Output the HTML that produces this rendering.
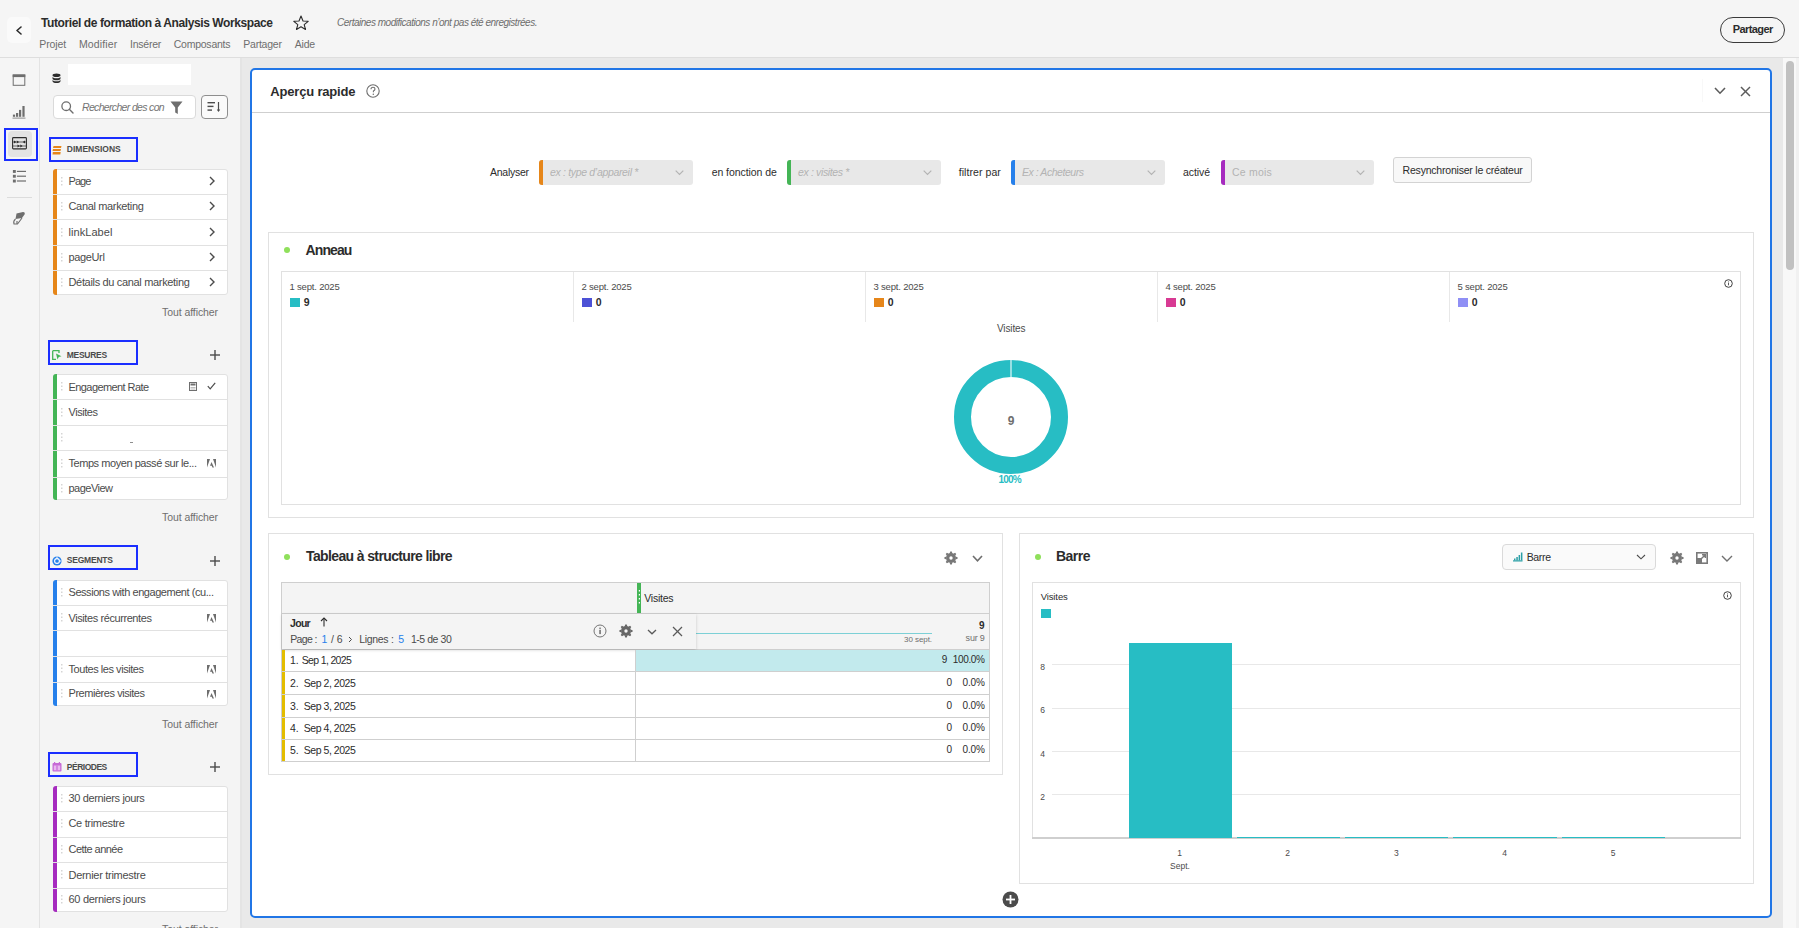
<!DOCTYPE html><html><head><meta charset="utf-8"><style>
html,body{margin:0;padding:0;width:1799px;height:928px;overflow:hidden;background:#f5f5f5;}
body{position:relative;font-family:"Liberation Sans",sans-serif;}
.r{position:absolute;display:block;}
.t{position:absolute;white-space:nowrap;line-height:1;}
</style></head><body>
<div class="r" style="left:0px;top:0px;width:1799px;height:57px;background:#f5f5f5"></div>
<div class="r" style="left:0px;top:57px;width:1799px;height:1px;background:#dedede"></div>
<div class="r" style="left:0px;top:58px;width:39px;height:870px;background:#f5f5f5"></div>
<div class="r" style="left:39px;top:58px;width:1px;height:870px;background:#e3e3e3"></div>
<div class="r" style="left:40px;top:58px;width:200px;height:870px;background:#f4f4f4"></div>
<div class="r" style="left:240px;top:58px;width:2px;height:870px;background:#e4e4e4"></div>
<div class="r" style="left:242px;top:58px;width:1541px;height:870px;background:#e9e9e9"></div>
<div class="r" style="left:1783px;top:58px;width:13px;height:870px;background:#f8f8f8"></div>
<div class="r" style="left:1796px;top:58px;width:3px;height:870px;background:#f1f1f1"></div>
<div class="r" style="left:1786px;top:61px;width:8px;height:209px;background:#c1c1c1;border-radius:4px"></div>
<div class="r" style="left:7px;top:17px;width:24px;height:26px;background:#fafafa;border-radius:5px"></div>
<svg class="r" style="left:15px;top:26px;" width="8" height="9" viewBox="0 0 8 9"><polyline points="6,1 2,4.5 6,8" fill="none" stroke="#2c2c2c" stroke-width="1.6" stroke-linecap="round" stroke-linejoin="round"/></svg>
<div class="t" style="left:41.00px;top:16.73px;font-size:12px;font-weight:bold;font-style:normal;color:#2c2c2c;letter-spacing:-0.404px;">Tutoriel de formation à Analysis Workspace</div>
<svg class="r" style="left:293px;top:15px;" width="16" height="15" viewBox="0 0 16 15"><polygon points="8,1 10,6 15.2,6.3 11.2,9.6 12.5,14.5 8,11.8 3.5,14.5 4.8,9.6 0.8,6.3 6,6" fill="none" stroke="#2c2c2c" stroke-width="1.1" stroke-linejoin="round"/></svg>
<div class="t" style="left:337.00px;top:17.70px;font-size:10px;font-weight:normal;font-style:italic;color:#6e6e6e;letter-spacing:-0.482px;">Certaines modifications n’ont pas été enregistrées.</div>
<div class="t" style="left:39.30px;top:39.13px;font-size:10.5px;font-weight:normal;font-style:normal;color:#6e6e6e;letter-spacing:-0.122px;">Projet</div>
<div class="t" style="left:79.00px;top:39.13px;font-size:10.5px;font-weight:normal;font-style:normal;color:#6e6e6e;letter-spacing:0.119px;">Modifier</div>
<div class="t" style="left:130.00px;top:39.13px;font-size:10.5px;font-weight:normal;font-style:normal;color:#6e6e6e;letter-spacing:-0.240px;">Insérer</div>
<div class="t" style="left:173.70px;top:39.13px;font-size:10.5px;font-weight:normal;font-style:normal;color:#6e6e6e;letter-spacing:-0.234px;">Composants</div>
<div class="t" style="left:243.30px;top:39.13px;font-size:10.5px;font-weight:normal;font-style:normal;color:#6e6e6e;letter-spacing:-0.234px;">Partager</div>
<div class="t" style="left:294.80px;top:39.13px;font-size:10.5px;font-weight:normal;font-style:normal;color:#6e6e6e;letter-spacing:-0.204px;">Aide</div>
<div class="r" style="left:1720px;top:17px;width:65px;height:26px;border:1.6px solid #3a3a3a;border-radius:13px;box-sizing:border-box"></div>
<div class="t" style="left:1732.70px;top:24.06px;font-size:11px;font-weight:bold;font-style:normal;color:#2c2c2c;letter-spacing:-0.579px;">Partager</div>
<svg class="r" style="left:12px;top:74px;" width="14" height="12" viewBox="0 0 14 12"><rect x="1.2" y="1" width="11.6" height="10.3" fill="none" stroke="#6e6e6e" stroke-width="1"/><rect x="0.7" y="0.5" width="12.6" height="2.6" fill="#6e6e6e"/></svg>
<svg class="r" style="left:12px;top:105px;" width="14" height="14" viewBox="0 0 14 14"><rect x="0.9" y="9.6" width="2.2" height="2.2" fill="#6e6e6e"/><rect x="4" y="8" width="2.2" height="3.8" fill="#6e6e6e"/><rect x="7" y="4.9" width="2.2" height="6.9" fill="#6e6e6e"/><rect x="10.4" y="1" width="2.2" height="10.8" fill="#6e6e6e"/><rect x="0.5" y="12.6" width="13" height="1" fill="#8a8a8a"/></svg>
<div class="r" style="left:4px;top:128px;width:34px;height:33px;border:2px solid #1a2eff;box-sizing:border-box"></div>
<div class="r" style="left:8px;top:131px;width:24px;height:26px;background:#e3e3e3;border-radius:4px"></div>
<svg class="r" style="left:12px;top:137px;" width="15" height="13" viewBox="0 0 15 13"><rect x="0.6" y="0.6" width="13.8" height="11.3" rx="0.8" fill="none" stroke="#2c2c2c" stroke-width="1.1"/><line x1="1" y1="5" x2="14" y2="5" stroke="#2c2c2c" stroke-width="0.7"/><line x1="1" y1="9" x2="14" y2="9" stroke="#2c2c2c" stroke-width="0.7"/><path d="M2 3.5 L4.3 5 L2 6.5Z M4.8 3.5 L7.1 5 L4.8 6.5Z M13 3.5 L10.7 5 L13 6.5Z M5.5 7.5 L7.8 9 L5.5 10.5Z M8.3 7.5 L10.6 9 L8.3 10.5Z" fill="#2c2c2c"/></svg>
<svg class="r" style="left:12px;top:169px;" width="15" height="14" viewBox="0 0 15 14"><rect x="0.9" y="1" width="2.9" height="2.9" fill="#6e6e6e"/><rect x="0.9" y="5.8" width="2.9" height="2.9" fill="#6e6e6e"/><rect x="0.9" y="10.6" width="2.9" height="2.9" fill="#6e6e6e"/><rect x="4.9" y="1.8" width="9.1" height="1.2" fill="#6e6e6e"/><rect x="4.9" y="6.6" width="9.1" height="1.2" fill="#6e6e6e"/><rect x="4.9" y="11.4" width="9.1" height="1.2" fill="#6e6e6e"/></svg>
<div class="r" style="left:7px;top:197px;width:25px;height:1px;background:#dcdcdc"></div>
<svg class="r" style="left:12px;top:211px;" width="14" height="15" viewBox="0 0 14 15"><path d="M4.5 2.5 L11 1 Q13.5 1 12.5 3.5 L10 7 L3.5 8 Z" fill="#6e6e6e"/><path d="M3.5 8 Q1 10 2 13 H5.5 L10 7" fill="none" stroke="#6e6e6e" stroke-width="1.1"/><path d="M5 10 V13" stroke="#6e6e6e" stroke-width="1.2"/></svg>
<svg class="r" style="left:52px;top:73px;" width="9" height="10" viewBox="0 0 9 10"><ellipse cx="4.5" cy="2.2" rx="4" ry="1.8" fill="#2c2c2c"/><path d="M0.5 3.5 v2 a4 1.8 0 0 0 8 0 v-2 a4 1.8 0 0 1 -8 0z" fill="#2c2c2c"/><path d="M0.5 6.5 v1.8 a4 1.8 0 0 0 8 0 v-1.8 a4 1.8 0 0 1 -8 0z" fill="#2c2c2c"/></svg>
<div class="r" style="left:68px;top:64px;width:123px;height:21px;background:#ffffff"></div>
<div class="r" style="left:53px;top:95px;width:143px;height:24px;background:#fff;border:1px solid #dadada;border-radius:4px;box-sizing:border-box"></div>
<svg class="r" style="left:61px;top:101px;" width="13" height="13" viewBox="0 0 13 13"><circle cx="5.2" cy="5.2" r="4.3" fill="none" stroke="#6e6e6e" stroke-width="1.3"/><line x1="8.3" y1="8.3" x2="12" y2="12" stroke="#6e6e6e" stroke-width="1.4" stroke-linecap="round"/></svg>
<div class="t" style="left:82.00px;top:101.93px;font-size:10.5px;font-weight:normal;font-style:italic;color:#747474;letter-spacing:-0.665px;">Rechercher des con</div>
<svg class="r" style="left:170px;top:101px;" width="13" height="14" viewBox="0 0 13 14"><path d="M0.5 0.5 H12.5 L7.8 6.5 V13 L5.2 11.5 V6.5 Z" fill="#6e6e6e"/></svg>
<div class="r" style="left:201px;top:95px;width:27px;height:24px;border:1px solid #8e8e8e;border-radius:4px;box-sizing:border-box;background:#fafafa"></div>
<svg class="r" style="left:207px;top:101px;" width="15" height="12" viewBox="0 0 15 12"><rect x="0.5" y="1" width="7.5" height="1.4" fill="#4b4b4b"/><rect x="0.5" y="4.7" width="6" height="1.4" fill="#4b4b4b"/><rect x="0.5" y="8.4" width="4.5" height="1.4" fill="#4b4b4b"/><line x1="11.5" y1="1" x2="11.5" y2="10" stroke="#4b4b4b" stroke-width="1.2"/><path d="M9.8 8.6 L11.5 11 L13.2 8.6 Z" fill="#4b4b4b"/></svg>
<div class="r" style="left:49px;top:137px;width:89px;height:25px;border:2px solid #1a2eff;box-sizing:border-box"></div>
<svg class="r" style="left:52px;top:144.5px" width="10" height="10" viewBox="0 0 10 10"><path d="M1.5 1 H9.5 L9 3 H1Z M1 4 H9 L8.5 6 H0.5Z M0.8 7 H8.7 L8.3 9.5 H0.5Z" fill="#e68619"/></svg>
<div class="t" style="left:66.80px;top:145.09px;font-size:8.5px;font-weight:bold;font-style:normal;color:#4b4b4b;letter-spacing:0.016px;">DIMENSIONS</div>
<div class="r" style="left:53px;top:169.1px;width:175px;height:125.50000000000003px;background:#fff;border:1px solid #e1e1e1;border-radius:3px;box-sizing:border-box"></div>
<div class="r" style="left:53px;top:169.1px;width:4px;height:24.599999999999994px;background:#e68619;border-radius:3px 0 0 0"></div>
<svg class="r" style="left:61px;top:176.90px" width="2" height="9"><rect x="0" y="0" width="1.5" height="1.5" fill="#d5d5d5"/><rect x="0" y="3.5" width="1.5" height="1.5" fill="#d5d5d5"/><rect x="0" y="7" width="1.5" height="1.5" fill="#d5d5d5"/></svg>
<div class="t" style="left:68.50px;top:176.16px;font-size:11px;font-weight:normal;font-style:normal;color:#4b4b4b;letter-spacing:-0.922px;">Page</div>
<svg class="r" style="left:208px;top:176.10px" width="8" height="10"><polyline points="2,1 6,5 2,9" fill="none" stroke="#4b4b4b" stroke-width="1.4"/></svg>
<div class="r" style="left:53px;top:194.7px;width:4px;height:24.600000000000023px;background:#e68619;border-radius:0"></div>
<div class="r" style="left:53px;top:193.7px;width:174px;height:1.0px;background:#e1e1e1"></div>
<svg class="r" style="left:61px;top:202.00px" width="2" height="9"><rect x="0" y="0" width="1.5" height="1.5" fill="#d5d5d5"/><rect x="0" y="3.5" width="1.5" height="1.5" fill="#d5d5d5"/><rect x="0" y="7" width="1.5" height="1.5" fill="#d5d5d5"/></svg>
<div class="t" style="left:68.50px;top:201.26px;font-size:11px;font-weight:normal;font-style:normal;color:#4b4b4b;letter-spacing:-0.340px;">Canal marketing</div>
<svg class="r" style="left:208px;top:201.20px" width="8" height="10"><polyline points="2,1 6,5 2,9" fill="none" stroke="#4b4b4b" stroke-width="1.4"/></svg>
<div class="r" style="left:53px;top:220.3px;width:4px;height:24.5px;background:#e68619;border-radius:0"></div>
<div class="r" style="left:53px;top:219.3px;width:174px;height:1.0px;background:#e1e1e1"></div>
<svg class="r" style="left:61px;top:227.55px" width="2" height="9"><rect x="0" y="0" width="1.5" height="1.5" fill="#d5d5d5"/><rect x="0" y="3.5" width="1.5" height="1.5" fill="#d5d5d5"/><rect x="0" y="7" width="1.5" height="1.5" fill="#d5d5d5"/></svg>
<div class="t" style="left:68.50px;top:226.81px;font-size:11px;font-weight:normal;font-style:normal;color:#4b4b4b;letter-spacing:0.064px;">linkLabel</div>
<svg class="r" style="left:208px;top:226.75px" width="8" height="10"><polyline points="2,1 6,5 2,9" fill="none" stroke="#4b4b4b" stroke-width="1.4"/></svg>
<div class="r" style="left:53px;top:245.8px;width:4px;height:24.30000000000001px;background:#e68619;border-radius:0"></div>
<div class="r" style="left:53px;top:244.8px;width:174px;height:1.0px;background:#e1e1e1"></div>
<svg class="r" style="left:61px;top:252.95px" width="2" height="9"><rect x="0" y="0" width="1.5" height="1.5" fill="#d5d5d5"/><rect x="0" y="3.5" width="1.5" height="1.5" fill="#d5d5d5"/><rect x="0" y="7" width="1.5" height="1.5" fill="#d5d5d5"/></svg>
<div class="t" style="left:68.50px;top:252.21px;font-size:11px;font-weight:normal;font-style:normal;color:#4b4b4b;letter-spacing:-0.360px;">pageUrl</div>
<svg class="r" style="left:208px;top:252.15px" width="8" height="10"><polyline points="2,1 6,5 2,9" fill="none" stroke="#4b4b4b" stroke-width="1.4"/></svg>
<div class="r" style="left:53px;top:271.1px;width:4px;height:23.5px;background:#e68619;border-radius:0;border-bottom-left-radius:3px"></div>
<div class="r" style="left:53px;top:270.1px;width:174px;height:1.0px;background:#e1e1e1"></div>
<svg class="r" style="left:61px;top:277.85px" width="2" height="9"><rect x="0" y="0" width="1.5" height="1.5" fill="#d5d5d5"/><rect x="0" y="3.5" width="1.5" height="1.5" fill="#d5d5d5"/><rect x="0" y="7" width="1.5" height="1.5" fill="#d5d5d5"/></svg>
<div class="t" style="left:68.50px;top:277.11px;font-size:11px;font-weight:normal;font-style:normal;color:#4b4b4b;letter-spacing:-0.332px;">Détails du canal marketing</div>
<svg class="r" style="left:208px;top:277.05px" width="8" height="10"><polyline points="2,1 6,5 2,9" fill="none" stroke="#4b4b4b" stroke-width="1.4"/></svg>
<div class="t" style="left:162.00px;top:306.83px;font-size:10.5px;font-weight:normal;font-style:normal;color:#6e6e6e;letter-spacing:-0.077px;">Tout afficher</div>
<div class="r" style="left:48px;top:339.5px;width:90px;height:25.0px;border:2px solid #1a2eff;box-sizing:border-box"></div>
<svg class="r" style="left:52px;top:350.0px" width="10" height="10" viewBox="0 0 10 10"><path d="M0.7 0.7 H7 V3 M0.7 0.7 V9.3 H4" fill="none" stroke="#44b556" stroke-width="1.3"/><path d="M4 3.5 L9.5 6.2 L6.8 7 L5.5 9.5Z" fill="#44b556"/></svg>
<div class="t" style="left:66.80px;top:350.59px;font-size:8.5px;font-weight:bold;font-style:normal;color:#4b4b4b;letter-spacing:-0.291px;">MESURES</div>
<svg class="r" style="left:210px;top:350.0px;" width="10" height="10" viewBox="0 0 10 10"><line x1="5" y1="0" x2="5" y2="10" stroke="#4b4b4b" stroke-width="1.4"/><line x1="0" y1="5" x2="10" y2="5" stroke="#4b4b4b" stroke-width="1.4"/></svg>
<div class="r" style="left:53px;top:374.1px;width:175px;height:125.5px;background:#fff;border:1px solid #e1e1e1;border-radius:3px;box-sizing:border-box"></div>
<div class="r" style="left:53px;top:374.1px;width:4px;height:25.299999999999955px;background:#44b556;border-radius:3px 0 0 0"></div>
<svg class="r" style="left:61px;top:382.25px" width="2" height="9"><rect x="0" y="0" width="1.5" height="1.5" fill="#d5d5d5"/><rect x="0" y="3.5" width="1.5" height="1.5" fill="#d5d5d5"/><rect x="0" y="7" width="1.5" height="1.5" fill="#d5d5d5"/></svg>
<div class="t" style="left:68.50px;top:381.51px;font-size:11px;font-weight:normal;font-style:normal;color:#4b4b4b;letter-spacing:-0.578px;">Engagement Rate</div>
<svg class="r" style="left:189px;top:382.45px" width="8" height="9"><rect x="0.5" y="0.5" width="7" height="8" fill="none" stroke="#6e6e6e" stroke-width="1"/><rect x="1.5" y="1.5" width="5" height="2" fill="#6e6e6e"/><rect x="1.5" y="5" width="5" height="0.8" fill="#aaa"/><rect x="1.5" y="6.6" width="5" height="0.8" fill="#aaa"/></svg><svg class="r" style="left:207px;top:382.25px" width="9" height="8"><polyline points="0.8,4.2 3.2,6.8 8.2,0.8" fill="none" stroke="#4b4b4b" stroke-width="1.2"/></svg>
<div class="r" style="left:53px;top:400.4px;width:4px;height:24.200000000000045px;background:#44b556;border-radius:0"></div>
<div class="r" style="left:53px;top:399.4px;width:174px;height:1.0px;background:#e1e1e1"></div>
<svg class="r" style="left:61px;top:407.50px" width="2" height="9"><rect x="0" y="0" width="1.5" height="1.5" fill="#d5d5d5"/><rect x="0" y="3.5" width="1.5" height="1.5" fill="#d5d5d5"/><rect x="0" y="7" width="1.5" height="1.5" fill="#d5d5d5"/></svg>
<div class="t" style="left:68.50px;top:406.76px;font-size:11px;font-weight:normal;font-style:normal;color:#4b4b4b;letter-spacing:-0.457px;">Visites</div>
<div class="r" style="left:53px;top:425.6px;width:4px;height:24.5px;background:#44b556;border-radius:0"></div>
<div class="r" style="left:53px;top:424.6px;width:174px;height:1.0px;background:#e1e1e1"></div>
<svg class="r" style="left:61px;top:432.85px" width="2" height="9"><rect x="0" y="0" width="1.5" height="1.5" fill="#d5d5d5"/><rect x="0" y="3.5" width="1.5" height="1.5" fill="#d5d5d5"/><rect x="0" y="7" width="1.5" height="1.5" fill="#d5d5d5"/></svg>
<div class="r" style="left:130px;top:441.85px;width:3px;height:1px;background:#8e8e8e"></div>
<div class="r" style="left:53px;top:451.1px;width:4px;height:25.5px;background:#44b556;border-radius:0"></div>
<div class="r" style="left:53px;top:450.1px;width:174px;height:1.0px;background:#e1e1e1"></div>
<svg class="r" style="left:61px;top:458.85px" width="2" height="9"><rect x="0" y="0" width="1.5" height="1.5" fill="#d5d5d5"/><rect x="0" y="3.5" width="1.5" height="1.5" fill="#d5d5d5"/><rect x="0" y="7" width="1.5" height="1.5" fill="#d5d5d5"/></svg>
<div class="t" style="left:68.50px;top:458.11px;font-size:11px;font-weight:normal;font-style:normal;color:#4b4b4b;letter-spacing:-0.445px;">Temps moyen passé sur le...</div>
<svg class="r" style="left:207px;top:459.35px" width="9" height="9" viewBox="0 0 9 9"><path d="M0 0 H3 L0 8.5Z M6 0 H9 V8.5Z M4.5 3 L7 8.5 H5.4 L4.7 6.8 H3 Z" fill="#6e6e6e"/></svg>
<div class="r" style="left:53px;top:477.6px;width:4px;height:22.0px;background:#44b556;border-radius:0;border-bottom-left-radius:3px"></div>
<div class="r" style="left:53px;top:476.6px;width:174px;height:1.0px;background:#e1e1e1"></div>
<svg class="r" style="left:61px;top:483.60px" width="2" height="9"><rect x="0" y="0" width="1.5" height="1.5" fill="#d5d5d5"/><rect x="0" y="3.5" width="1.5" height="1.5" fill="#d5d5d5"/><rect x="0" y="7" width="1.5" height="1.5" fill="#d5d5d5"/></svg>
<div class="t" style="left:68.50px;top:482.86px;font-size:11px;font-weight:normal;font-style:normal;color:#4b4b4b;letter-spacing:-0.514px;">pageView</div>
<div class="t" style="left:162.00px;top:512.23px;font-size:10.5px;font-weight:normal;font-style:normal;color:#6e6e6e;letter-spacing:-0.077px;">Tout afficher</div>
<div class="r" style="left:48px;top:545px;width:90px;height:25px;border:2px solid #1a2eff;box-sizing:border-box"></div>
<svg class="r" style="left:52px;top:555.5px" width="10" height="10" viewBox="0 0 10 10"><circle cx="5" cy="5" r="4.6" fill="#2680eb"/><circle cx="5" cy="5" r="2.4" fill="none" stroke="#fff" stroke-width="1.1"/><path d="M5 0.6 V2.4 M9.2 5 H7.4" stroke="#fff" stroke-width="1"/></svg>
<div class="t" style="left:66.80px;top:556.09px;font-size:8.5px;font-weight:bold;font-style:normal;color:#4b4b4b;letter-spacing:-0.213px;">SEGMENTS</div>
<svg class="r" style="left:210px;top:555.5px;" width="10" height="10" viewBox="0 0 10 10"><line x1="5" y1="0" x2="5" y2="10" stroke="#4b4b4b" stroke-width="1.4"/><line x1="0" y1="5" x2="10" y2="5" stroke="#4b4b4b" stroke-width="1.4"/></svg>
<div class="r" style="left:53px;top:580.1px;width:175px;height:125.69999999999993px;background:#fff;border:1px solid #e1e1e1;border-radius:3px;box-sizing:border-box"></div>
<div class="r" style="left:53px;top:580.1px;width:4px;height:25.199999999999932px;background:#2680eb;border-radius:3px 0 0 0"></div>
<svg class="r" style="left:61px;top:588.20px" width="2" height="9"><rect x="0" y="0" width="1.5" height="1.5" fill="#d5d5d5"/><rect x="0" y="3.5" width="1.5" height="1.5" fill="#d5d5d5"/><rect x="0" y="7" width="1.5" height="1.5" fill="#d5d5d5"/></svg>
<div class="t" style="left:68.50px;top:587.46px;font-size:11px;font-weight:normal;font-style:normal;color:#4b4b4b;letter-spacing:-0.451px;">Sessions with engagement (cu...</div>
<div class="r" style="left:53px;top:606.3px;width:4px;height:24.0px;background:#2680eb;border-radius:0"></div>
<div class="r" style="left:53px;top:605.3px;width:174px;height:1.0px;background:#e1e1e1"></div>
<svg class="r" style="left:61px;top:613.30px" width="2" height="9"><rect x="0" y="0" width="1.5" height="1.5" fill="#d5d5d5"/><rect x="0" y="3.5" width="1.5" height="1.5" fill="#d5d5d5"/><rect x="0" y="7" width="1.5" height="1.5" fill="#d5d5d5"/></svg>
<div class="t" style="left:68.50px;top:612.56px;font-size:11px;font-weight:normal;font-style:normal;color:#4b4b4b;letter-spacing:-0.415px;">Visites récurrentes</div>
<svg class="r" style="left:207px;top:613.80px" width="9" height="9" viewBox="0 0 9 9"><path d="M0 0 H3 L0 8.5Z M6 0 H9 V8.5Z M4.5 3 L7 8.5 H5.4 L4.7 6.8 H3 Z" fill="#6e6e6e"/></svg>
<div class="r" style="left:53px;top:631.3px;width:4px;height:25.0px;background:#2680eb;border-radius:0"></div>
<div class="r" style="left:53px;top:630.3px;width:174px;height:1.0px;background:#e1e1e1"></div>
<div class="r" style="left:53px;top:657.3px;width:4px;height:24.300000000000068px;background:#2680eb;border-radius:0"></div>
<div class="r" style="left:53px;top:656.3px;width:174px;height:1.0px;background:#e1e1e1"></div>
<svg class="r" style="left:61px;top:664.45px" width="2" height="9"><rect x="0" y="0" width="1.5" height="1.5" fill="#d5d5d5"/><rect x="0" y="3.5" width="1.5" height="1.5" fill="#d5d5d5"/><rect x="0" y="7" width="1.5" height="1.5" fill="#d5d5d5"/></svg>
<div class="t" style="left:68.50px;top:663.71px;font-size:11px;font-weight:normal;font-style:normal;color:#4b4b4b;letter-spacing:-0.452px;">Toutes les visites</div>
<svg class="r" style="left:207px;top:664.95px" width="9" height="9" viewBox="0 0 9 9"><path d="M0 0 H3 L0 8.5Z M6 0 H9 V8.5Z M4.5 3 L7 8.5 H5.4 L4.7 6.8 H3 Z" fill="#6e6e6e"/></svg>
<div class="r" style="left:53px;top:682.6px;width:4px;height:23.199999999999932px;background:#2680eb;border-radius:0;border-bottom-left-radius:3px"></div>
<div class="r" style="left:53px;top:681.6px;width:174px;height:1.0px;background:#e1e1e1"></div>
<svg class="r" style="left:61px;top:689.20px" width="2" height="9"><rect x="0" y="0" width="1.5" height="1.5" fill="#d5d5d5"/><rect x="0" y="3.5" width="1.5" height="1.5" fill="#d5d5d5"/><rect x="0" y="7" width="1.5" height="1.5" fill="#d5d5d5"/></svg>
<div class="t" style="left:68.50px;top:688.46px;font-size:11px;font-weight:normal;font-style:normal;color:#4b4b4b;letter-spacing:-0.455px;">Premières visites</div>
<svg class="r" style="left:207px;top:689.70px" width="9" height="9" viewBox="0 0 9 9"><path d="M0 0 H3 L0 8.5Z M6 0 H9 V8.5Z M4.5 3 L7 8.5 H5.4 L4.7 6.8 H3 Z" fill="#6e6e6e"/></svg>
<div class="t" style="left:162.00px;top:718.73px;font-size:10.5px;font-weight:normal;font-style:normal;color:#6e6e6e;letter-spacing:-0.077px;">Tout afficher</div>
<div class="r" style="left:48px;top:751.5px;width:90px;height:25.5px;border:2px solid #1a2eff;box-sizing:border-box"></div>
<svg class="r" style="left:52px;top:762.25px" width="10" height="10" viewBox="0 0 10 10"><rect x="0.5" y="1" width="9" height="8.5" rx="1" fill="#c76ad6"/><rect x="1.8" y="3.5" width="6.4" height="4.8" fill="#e9b6f0"/><rect x="2" y="0" width="1.2" height="2" fill="#c76ad6"/><rect x="6.8" y="0" width="1.2" height="2" fill="#c76ad6"/><rect x="4.4" y="3.5" width="1.2" height="4.8" fill="#c76ad6"/></svg>
<div class="t" style="left:66.80px;top:762.84px;font-size:8.5px;font-weight:bold;font-style:normal;color:#4b4b4b;letter-spacing:-0.491px;">PÉRIODES</div>
<svg class="r" style="left:210px;top:762.25px;" width="10" height="10" viewBox="0 0 10 10"><line x1="5" y1="0" x2="5" y2="10" stroke="#4b4b4b" stroke-width="1.4"/><line x1="0" y1="5" x2="10" y2="5" stroke="#4b4b4b" stroke-width="1.4"/></svg>
<div class="r" style="left:53px;top:786.1px;width:175px;height:125.5px;background:#fff;border:1px solid #e1e1e1;border-radius:3px;box-sizing:border-box"></div>
<div class="r" style="left:53px;top:786.1px;width:4px;height:24.600000000000023px;background:#a62bbf;border-radius:3px 0 0 0"></div>
<svg class="r" style="left:61px;top:793.90px" width="2" height="9"><rect x="0" y="0" width="1.5" height="1.5" fill="#d5d5d5"/><rect x="0" y="3.5" width="1.5" height="1.5" fill="#d5d5d5"/><rect x="0" y="7" width="1.5" height="1.5" fill="#d5d5d5"/></svg>
<div class="t" style="left:68.50px;top:793.16px;font-size:11px;font-weight:normal;font-style:normal;color:#4b4b4b;letter-spacing:-0.349px;">30 derniers jours</div>
<div class="r" style="left:53px;top:811.7px;width:4px;height:24.899999999999977px;background:#a62bbf;border-radius:0"></div>
<div class="r" style="left:53px;top:810.7px;width:174px;height:1.0px;background:#e1e1e1"></div>
<svg class="r" style="left:61px;top:819.15px" width="2" height="9"><rect x="0" y="0" width="1.5" height="1.5" fill="#d5d5d5"/><rect x="0" y="3.5" width="1.5" height="1.5" fill="#d5d5d5"/><rect x="0" y="7" width="1.5" height="1.5" fill="#d5d5d5"/></svg>
<div class="t" style="left:68.50px;top:818.41px;font-size:11px;font-weight:normal;font-style:normal;color:#4b4b4b;letter-spacing:-0.325px;">Ce trimestre</div>
<div class="r" style="left:53px;top:837.6px;width:4px;height:24.5px;background:#a62bbf;border-radius:0"></div>
<div class="r" style="left:53px;top:836.6px;width:174px;height:1.0px;background:#e1e1e1"></div>
<svg class="r" style="left:61px;top:844.85px" width="2" height="9"><rect x="0" y="0" width="1.5" height="1.5" fill="#d5d5d5"/><rect x="0" y="3.5" width="1.5" height="1.5" fill="#d5d5d5"/><rect x="0" y="7" width="1.5" height="1.5" fill="#d5d5d5"/></svg>
<div class="t" style="left:68.50px;top:844.11px;font-size:11px;font-weight:normal;font-style:normal;color:#4b4b4b;letter-spacing:-0.540px;">Cette année</div>
<div class="r" style="left:53px;top:863.1px;width:4px;height:24.5px;background:#a62bbf;border-radius:0"></div>
<div class="r" style="left:53px;top:862.1px;width:174px;height:1.0px;background:#e1e1e1"></div>
<svg class="r" style="left:61px;top:870.35px" width="2" height="9"><rect x="0" y="0" width="1.5" height="1.5" fill="#d5d5d5"/><rect x="0" y="3.5" width="1.5" height="1.5" fill="#d5d5d5"/><rect x="0" y="7" width="1.5" height="1.5" fill="#d5d5d5"/></svg>
<div class="t" style="left:68.50px;top:869.61px;font-size:11px;font-weight:normal;font-style:normal;color:#4b4b4b;letter-spacing:-0.288px;">Dernier trimestre</div>
<div class="r" style="left:53px;top:888.6px;width:4px;height:23.0px;background:#a62bbf;border-radius:0;border-bottom-left-radius:3px"></div>
<div class="r" style="left:53px;top:887.6px;width:174px;height:1.0px;background:#e1e1e1"></div>
<svg class="r" style="left:61px;top:895.10px" width="2" height="9"><rect x="0" y="0" width="1.5" height="1.5" fill="#d5d5d5"/><rect x="0" y="3.5" width="1.5" height="1.5" fill="#d5d5d5"/><rect x="0" y="7" width="1.5" height="1.5" fill="#d5d5d5"/></svg>
<div class="t" style="left:68.50px;top:894.36px;font-size:11px;font-weight:normal;font-style:normal;color:#4b4b4b;letter-spacing:-0.290px;">60 derniers jours</div>
<div class="t" style="left:162.00px;top:924.43px;font-size:10.5px;font-weight:normal;font-style:normal;color:#6e6e6e;letter-spacing:-0.077px;">Tout afficher</div>
<div class="r" style="left:250px;top:68px;width:1522px;height:850px;background:#fff;border:2px solid #2176e6;border-radius:5px;box-sizing:border-box"></div>
<div class="r" style="left:252px;top:112px;width:1518px;height:1px;background:#cfcfcf"></div>
<div class="t" style="left:270.30px;top:84.90px;font-size:13px;font-weight:bold;font-style:normal;color:#2c2c2c;letter-spacing:-0.186px;">Aperçu rapide</div>
<svg class="r" style="left:366px;top:84px;" width="14" height="14" viewBox="0 0 14 14"><circle cx="7" cy="7" r="6.2" fill="none" stroke="#6e6e6e" stroke-width="1.1"/><path d="M5 5.3 Q5 3.3 7 3.3 Q9 3.3 9 5.1 Q9 6.3 7.4 7 V8.3" fill="none" stroke="#6e6e6e" stroke-width="1.1"/><circle cx="7.3" cy="10.3" r="0.75" fill="#6e6e6e"/></svg>
<div class="r" style="left:1702px;top:79px;width:1px;height:23px;background:#f8f8f8"></div>
<svg class="r" style="left:1714px;top:87px;" width="12" height="8" viewBox="0 0 12 8"><polyline points="1,1 6,6.2 11,1" fill="none" stroke="#5c5c5c" stroke-width="1.6"/></svg>
<svg class="r" style="left:1740px;top:86px;" width="11" height="11" viewBox="0 0 11 11"><line x1="1" y1="1" x2="10" y2="10" stroke="#5c5c5c" stroke-width="1.5"/><line x1="10" y1="1" x2="1" y2="10" stroke="#5c5c5c" stroke-width="1.5"/></svg>
<div class="t" style="left:490.00px;top:167.03px;font-size:10.5px;font-weight:normal;font-style:normal;color:#2c2c2c;letter-spacing:-0.269px;">Analyser</div>
<div class="r" style="left:539px;top:160px;width:154px;height:25px;background:#e8e8e8;border-radius:3px"></div>
<div class="r" style="left:539px;top:160px;width:4px;height:25px;background:#e68619;border-radius:3px 0 0 3px"></div>
<div class="t" style="left:550.00px;top:166.63px;font-size:10.5px;font-weight:normal;font-style:italic;color:#b3b3b3;letter-spacing:-0.325px;">ex : type d’appareil *</div>
<svg class="r" style="left:675px;top:170px;" width="9" height="6" viewBox="0 0 9 6"><polyline points="0.7,0.7 4.5,4.5 8.3,0.7" fill="none" stroke="#b3b3b3" stroke-width="1.2"/></svg>
<div class="t" style="left:711.70px;top:167.03px;font-size:10.5px;font-weight:normal;font-style:normal;color:#2c2c2c;letter-spacing:-0.069px;">en fonction de</div>
<div class="r" style="left:787px;top:160px;width:154px;height:25px;background:#e8e8e8;border-radius:3px"></div>
<div class="r" style="left:787px;top:160px;width:4px;height:25px;background:#44b556;border-radius:3px 0 0 3px"></div>
<div class="t" style="left:798.00px;top:166.63px;font-size:10.5px;font-weight:normal;font-style:italic;color:#b3b3b3;letter-spacing:-0.358px;">ex : visites *</div>
<svg class="r" style="left:923px;top:170px;" width="9" height="6" viewBox="0 0 9 6"><polyline points="0.7,0.7 4.5,4.5 8.3,0.7" fill="none" stroke="#b3b3b3" stroke-width="1.2"/></svg>
<div class="t" style="left:958.70px;top:167.03px;font-size:10.5px;font-weight:normal;font-style:normal;color:#2c2c2c;letter-spacing:0.070px;">filtrer par</div>
<div class="r" style="left:1011px;top:160px;width:154px;height:25px;background:#e8e8e8;border-radius:3px"></div>
<div class="r" style="left:1011px;top:160px;width:4px;height:25px;background:#2680eb;border-radius:3px 0 0 3px"></div>
<div class="t" style="left:1022.00px;top:166.63px;font-size:10.5px;font-weight:normal;font-style:italic;color:#b3b3b3;letter-spacing:-0.449px;">Ex : Acheteurs</div>
<svg class="r" style="left:1147px;top:170px;" width="9" height="6" viewBox="0 0 9 6"><polyline points="0.7,0.7 4.5,4.5 8.3,0.7" fill="none" stroke="#b3b3b3" stroke-width="1.2"/></svg>
<div class="t" style="left:1183.00px;top:167.03px;font-size:10.5px;font-weight:normal;font-style:normal;color:#2c2c2c;letter-spacing:-0.072px;">activé</div>
<div class="r" style="left:1221px;top:160px;width:153px;height:25px;background:#e8e8e8;border-radius:3px"></div>
<div class="r" style="left:1221px;top:160px;width:4px;height:25px;background:#a62bbf;border-radius:3px 0 0 3px"></div>
<div class="t" style="left:1232.00px;top:166.63px;font-size:10.5px;font-weight:normal;font-style:normal;color:#b3b3b3;letter-spacing:0.213px;">Ce mois</div>
<svg class="r" style="left:1356px;top:170px;" width="9" height="6" viewBox="0 0 9 6"><polyline points="0.7,0.7 4.5,4.5 8.3,0.7" fill="none" stroke="#b3b3b3" stroke-width="1.2"/></svg>
<div class="r" style="left:1393px;top:157px;width:139px;height:26px;background:#f8f8f8;border:1px solid #d3d3d3;border-radius:3px;box-sizing:border-box"></div>
<div class="t" style="left:1402.60px;top:164.83px;font-size:10.5px;font-weight:normal;font-style:normal;color:#2c2c2c;letter-spacing:-0.210px;">Resynchroniser le créateur</div>
<div class="r" style="left:268px;top:232px;width:1486px;height:286px;border:1px solid #e1e1e1;box-sizing:border-box;background:#fff"></div>
<div class="r" style="left:284px;top:247px;width:6px;height:6px;background:#8fe05b;border-radius:50%"></div>
<div class="t" style="left:305.50px;top:242.77px;font-size:14px;font-weight:bold;font-style:normal;color:#2c2c2c;letter-spacing:-0.890px;">Anneau</div>
<div class="r" style="left:281px;top:271px;width:1460px;height:234px;border:1px solid #e1e1e1;box-sizing:border-box"></div>
<div class="t" style="left:289.50px;top:281.76px;font-size:9.5px;font-weight:normal;font-style:normal;color:#4b4b4b;letter-spacing:-0.191px;">1 sept. 2025</div>
<div class="r" style="left:289.5px;top:298px;width:10.0px;height:9px;background:#27bdc4"></div>
<div class="t" style="left:303.70px;top:296.63px;font-size:10.5px;font-weight:bold;font-style:normal;color:#2c2c2c;letter-spacing:0.000px;">9</div>
<div class="r" style="left:573px;top:272px;width:1px;height:50px;background:#e8e8e8"></div>
<div class="t" style="left:581.50px;top:281.76px;font-size:9.5px;font-weight:normal;font-style:normal;color:#4b4b4b;letter-spacing:-0.191px;">2 sept. 2025</div>
<div class="r" style="left:581.5px;top:298px;width:10.0px;height:9px;background:#4c51d6"></div>
<div class="t" style="left:595.70px;top:296.63px;font-size:10.5px;font-weight:bold;font-style:normal;color:#2c2c2c;letter-spacing:0.000px;">0</div>
<div class="r" style="left:865px;top:272px;width:1px;height:50px;background:#e8e8e8"></div>
<div class="t" style="left:873.50px;top:281.76px;font-size:9.5px;font-weight:normal;font-style:normal;color:#4b4b4b;letter-spacing:-0.191px;">3 sept. 2025</div>
<div class="r" style="left:873.5px;top:298px;width:10.0px;height:9px;background:#e6861a"></div>
<div class="t" style="left:887.70px;top:296.63px;font-size:10.5px;font-weight:bold;font-style:normal;color:#2c2c2c;letter-spacing:0.000px;">0</div>
<div class="r" style="left:1157px;top:272px;width:1px;height:50px;background:#e8e8e8"></div>
<div class="t" style="left:1165.50px;top:281.76px;font-size:9.5px;font-weight:normal;font-style:normal;color:#4b4b4b;letter-spacing:-0.191px;">4 sept. 2025</div>
<div class="r" style="left:1165.5px;top:298px;width:10.0px;height:9px;background:#d83a93"></div>
<div class="t" style="left:1179.70px;top:296.63px;font-size:10.5px;font-weight:bold;font-style:normal;color:#2c2c2c;letter-spacing:0.000px;">0</div>
<div class="r" style="left:1449px;top:272px;width:1px;height:50px;background:#e8e8e8"></div>
<div class="t" style="left:1457.50px;top:281.76px;font-size:9.5px;font-weight:normal;font-style:normal;color:#4b4b4b;letter-spacing:-0.191px;">5 sept. 2025</div>
<div class="r" style="left:1457.5px;top:298px;width:10.0px;height:9px;background:#8f8ff5"></div>
<div class="t" style="left:1471.70px;top:296.63px;font-size:10.5px;font-weight:bold;font-style:normal;color:#2c2c2c;letter-spacing:0.000px;">0</div>
<svg class="r" style="left:1723.5px;top:279.3px;" width="9" height="9" viewBox="0 0 9 9"><circle cx="4.5" cy="4.5" r="3.8" fill="none" stroke="#2c2c2c" stroke-width="0.9"/><rect x="4" y="3.9" width="0.9" height="2.4" fill="#444"/><rect x="4" y="2.5" width="0.9" height="0.9" fill="#444"/></svg>
<div class="t" style="left:997.00px;top:323.70px;font-size:10px;font-weight:normal;font-style:normal;color:#4b4b4b;letter-spacing:-0.125px;">Visites</div>
<svg class="r" style="left:954px;top:360px;" width="114" height="114" viewBox="0 0 114 114"><circle cx="57" cy="57" r="48.5" fill="none" stroke="#27bdc4" stroke-width="17"/><line x1="57" y1="0" x2="57" y2="17" stroke="#e6f7f8" stroke-width="1.2"/></svg>
<div class="t" style="left:1007.66px;top:415.43px;font-size:12px;font-weight:bold;font-style:normal;color:#6e6e6e;letter-spacing:0.000px;">9</div>
<div class="t" style="left:998.45px;top:474.50px;font-size:10px;font-weight:bold;font-style:normal;color:#27bdc4;letter-spacing:-0.769px;">100%</div>
<div class="r" style="left:268px;top:533px;width:735px;height:242px;border:1px solid #e1e1e1;box-sizing:border-box;background:#fff"></div>
<div class="r" style="left:284px;top:554px;width:6px;height:6px;background:#8fe05b;border-radius:50%"></div>
<div class="t" style="left:306.00px;top:548.87px;font-size:14px;font-weight:bold;font-style:normal;color:#2c2c2c;letter-spacing:-0.623px;">Tableau à structure libre</div>
<svg class="r" style="left:944px;top:551px;" width="14" height="14" viewBox="0 0 14 14"><g transform="translate(7,7)" fill="#777"><circle r="4.9"/><path d="M-1.4 -4.5 L-0.8 -6.6 H0.8 L1.4 -4.5Z" transform="rotate(0)"/><path d="M-1.4 -4.5 L-0.8 -6.6 H0.8 L1.4 -4.5Z" transform="rotate(45)"/><path d="M-1.4 -4.5 L-0.8 -6.6 H0.8 L1.4 -4.5Z" transform="rotate(90)"/><path d="M-1.4 -4.5 L-0.8 -6.6 H0.8 L1.4 -4.5Z" transform="rotate(135)"/><path d="M-1.4 -4.5 L-0.8 -6.6 H0.8 L1.4 -4.5Z" transform="rotate(180)"/><path d="M-1.4 -4.5 L-0.8 -6.6 H0.8 L1.4 -4.5Z" transform="rotate(225)"/><path d="M-1.4 -4.5 L-0.8 -6.6 H0.8 L1.4 -4.5Z" transform="rotate(270)"/><path d="M-1.4 -4.5 L-0.8 -6.6 H0.8 L1.4 -4.5Z" transform="rotate(315)"/><circle r="1.7" fill="#fff"/></g></svg>
<svg class="r" style="left:972px;top:555px;" width="11" height="8" viewBox="0 0 11 8"><polyline points="1,1 5.5,5.8 10,1" fill="none" stroke="#6e6e6e" stroke-width="1.6"/></svg>
<div class="r" style="left:281px;top:582px;width:709px;height:180px;border:1px solid #cfcfcf;box-sizing:border-box;background:#fff"></div>
<div class="r" style="left:282px;top:583px;width:707px;height:30px;background:#f4f4f4"></div>
<div class="r" style="left:282px;top:613px;width:707px;height:1px;background:#cfcfcf"></div>
<div class="r" style="left:636.5px;top:583px;width:4.5px;height:30px;background:#44b556"></div>
<svg class="r" style="left:637.5px;top:588px" width="3" height="20"><rect x="0.8" y="2" width="1.2" height="1.5" fill="#fff"/><rect x="0.8" y="6" width="1.2" height="1.5" fill="#fff"/><rect x="0.8" y="10" width="1.2" height="1.5" fill="#fff"/><rect x="0.8" y="14" width="1.2" height="1.5" fill="#fff"/></svg>
<div class="t" style="left:644.30px;top:592.63px;font-size:10.5px;font-weight:normal;font-style:normal;color:#2c2c2c;letter-spacing:-0.248px;">Visites</div>
<div class="r" style="left:636px;top:614px;width:353px;height:35px;background:#f4f4f4"></div>
<div class="r" style="left:282px;top:649px;width:707px;height:1px;background:#cfcfcf"></div>
<div class="r" style="left:695px;top:633px;width:237px;height:1px;background:#7cd0d6"></div>
<div class="t" style="left:904.00px;top:635.96px;font-size:8px;font-weight:normal;font-style:normal;color:#6e6e6e;letter-spacing:-0.058px;">30 sept.</div>
<div class="t" style="left:979.04px;top:620.69px;font-size:10px;font-weight:bold;font-style:normal;color:#2c2c2c;letter-spacing:0.000px;">9</div>
<div class="t" style="left:965.60px;top:633.83px;font-size:9px;font-weight:normal;font-style:normal;color:#6e6e6e;letter-spacing:-0.202px;">sur 9</div>
<div class="r" style="left:282px;top:614px;width:414px;height:35px;background:#f4f4f4;box-shadow:0 1px 3px rgba(0,0,0,0.18)"></div>
<div class="t" style="left:290.00px;top:617.63px;font-size:10.5px;font-weight:bold;font-style:normal;color:#2c2c2c;letter-spacing:-0.688px;">Jour</div>
<svg class="r" style="left:320px;top:617px;" width="8" height="10" viewBox="0 0 8 10"><line x1="4" y1="1.5" x2="4" y2="9.5" stroke="#2c2c2c" stroke-width="1.1"/><polyline points="1,4 4,1 7,4" fill="none" stroke="#2c2c2c" stroke-width="1.1"/></svg>
<div class="t" style="left:290.20px;top:633.63px;font-size:10.5px;font-weight:normal;font-style:normal;color:#4b4b4b;letter-spacing:-0.626px;">Page :</div>
<div class="t" style="left:321.40px;top:633.63px;font-size:10.5px;font-weight:normal;font-style:normal;color:#2680eb;letter-spacing:0.000px;">1</div>
<div class="t" style="left:331.10px;top:633.63px;font-size:10.5px;font-weight:normal;font-style:normal;color:#4b4b4b;letter-spacing:-0.058px;">/ 6</div>
<div class="t" style="left:359.20px;top:633.63px;font-size:10.5px;font-weight:normal;font-style:normal;color:#4b4b4b;letter-spacing:-0.309px;">Lignes :</div>
<div class="t" style="left:398.30px;top:633.63px;font-size:10.5px;font-weight:normal;font-style:normal;color:#2680eb;letter-spacing:0.000px;">5</div>
<div class="t" style="left:410.90px;top:633.63px;font-size:10.5px;font-weight:normal;font-style:normal;color:#4b4b4b;letter-spacing:-0.441px;">1-5 de 30</div>
<svg class="r" style="left:348px;top:636px;" width="5" height="7" viewBox="0 0 5 7"><polyline points="1,1 3.5,3.5 1,6" fill="none" stroke="#4b4b4b" stroke-width="1"/></svg>
<svg class="r" style="left:593px;top:624px;" width="14" height="14" viewBox="0 0 14 14"><circle cx="7" cy="7" r="6" fill="none" stroke="#666" stroke-width="0.9"/><rect x="6.4" y="5.8" width="1.3" height="4.3" fill="#555"/><rect x="6.4" y="3.6" width="1.3" height="1.3" fill="#555"/></svg>
<svg class="r" style="left:619px;top:624px;" width="14" height="14" viewBox="0 0 14 14"><g transform="translate(7,7)" fill="#666"><circle r="4.9"/><path d="M-1.4 -4.5 L-0.8 -6.6 H0.8 L1.4 -4.5Z" transform="rotate(0)"/><path d="M-1.4 -4.5 L-0.8 -6.6 H0.8 L1.4 -4.5Z" transform="rotate(45)"/><path d="M-1.4 -4.5 L-0.8 -6.6 H0.8 L1.4 -4.5Z" transform="rotate(90)"/><path d="M-1.4 -4.5 L-0.8 -6.6 H0.8 L1.4 -4.5Z" transform="rotate(135)"/><path d="M-1.4 -4.5 L-0.8 -6.6 H0.8 L1.4 -4.5Z" transform="rotate(180)"/><path d="M-1.4 -4.5 L-0.8 -6.6 H0.8 L1.4 -4.5Z" transform="rotate(225)"/><path d="M-1.4 -4.5 L-0.8 -6.6 H0.8 L1.4 -4.5Z" transform="rotate(270)"/><path d="M-1.4 -4.5 L-0.8 -6.6 H0.8 L1.4 -4.5Z" transform="rotate(315)"/><circle r="1.7" fill="#f4f4f4"/></g></svg>
<svg class="r" style="left:647px;top:628.5px;" width="10" height="6" viewBox="0 0 10 6"><polyline points="1,1 5,4.8 9,1" fill="none" stroke="#5a5a5a" stroke-width="1.3"/></svg>
<svg class="r" style="left:672px;top:626px;" width="11" height="11" viewBox="0 0 11 11"><line x1="1" y1="1" x2="10" y2="10" stroke="#5a5a5a" stroke-width="1.3"/><line x1="10" y1="1" x2="1" y2="10" stroke="#5a5a5a" stroke-width="1.3"/></svg>
<div class="r" style="left:636px;top:650px;width:353px;height:21px;background:#c2eaed"></div>
<div class="r" style="left:282px;top:650px;width:3px;height:21px;background:#e3bd00"></div>
<div class="t" style="left:290.00px;top:655.13px;font-size:10.5px;font-weight:normal;font-style:normal;color:#2c2c2c;letter-spacing:0.000px;">1.</div>
<div class="t" style="left:301.70px;top:655.13px;font-size:10.5px;font-weight:normal;font-style:normal;color:#2c2c2c;letter-spacing:-0.648px;">Sep 1, 2025</div>
<div class="t" style="left:952.80px;top:655.19px;font-size:10px;font-weight:normal;font-style:normal;color:#2c2c2c;letter-spacing:-0.353px;">100.0%</div>
<div class="t" style="left:941.74px;top:655.19px;font-size:10px;font-weight:normal;font-style:normal;color:#2c2c2c;letter-spacing:0.000px;">9</div>
<div class="r" style="left:282px;top:671px;width:3px;height:23px;background:#e3bd00"></div>
<div class="r" style="left:282px;top:671px;width:707px;height:1px;background:#cfcfcf"></div>
<div class="t" style="left:290.00px;top:678.18px;font-size:10.5px;font-weight:normal;font-style:normal;color:#2c2c2c;letter-spacing:0.000px;">2.</div>
<div class="t" style="left:303.80px;top:678.18px;font-size:10.5px;font-weight:normal;font-style:normal;color:#2c2c2c;letter-spacing:-0.467px;">Sep 2, 2025</div>
<div class="t" style="left:962.50px;top:678.24px;font-size:10px;font-weight:normal;font-style:normal;color:#2c2c2c;letter-spacing:-0.173px;">0.0%</div>
<div class="t" style="left:946.44px;top:678.24px;font-size:10px;font-weight:normal;font-style:normal;color:#2c2c2c;letter-spacing:0.000px;">0</div>
<div class="r" style="left:282px;top:694px;width:3px;height:23px;background:#e3bd00"></div>
<div class="r" style="left:282px;top:694px;width:707px;height:1px;background:#cfcfcf"></div>
<div class="t" style="left:290.00px;top:701.03px;font-size:10.5px;font-weight:normal;font-style:normal;color:#2c2c2c;letter-spacing:0.000px;">3.</div>
<div class="t" style="left:303.80px;top:701.03px;font-size:10.5px;font-weight:normal;font-style:normal;color:#2c2c2c;letter-spacing:-0.467px;">Sep 3, 2025</div>
<div class="t" style="left:962.50px;top:701.09px;font-size:10px;font-weight:normal;font-style:normal;color:#2c2c2c;letter-spacing:-0.173px;">0.0%</div>
<div class="t" style="left:946.44px;top:701.09px;font-size:10px;font-weight:normal;font-style:normal;color:#2c2c2c;letter-spacing:0.000px;">0</div>
<div class="r" style="left:282px;top:717px;width:3px;height:22px;background:#e3bd00"></div>
<div class="r" style="left:282px;top:717px;width:707px;height:1px;background:#cfcfcf"></div>
<div class="t" style="left:290.00px;top:723.28px;font-size:10.5px;font-weight:normal;font-style:normal;color:#2c2c2c;letter-spacing:0.000px;">4.</div>
<div class="t" style="left:303.80px;top:723.28px;font-size:10.5px;font-weight:normal;font-style:normal;color:#2c2c2c;letter-spacing:-0.467px;">Sep 4, 2025</div>
<div class="t" style="left:962.50px;top:723.34px;font-size:10px;font-weight:normal;font-style:normal;color:#2c2c2c;letter-spacing:-0.173px;">0.0%</div>
<div class="t" style="left:946.44px;top:723.34px;font-size:10px;font-weight:normal;font-style:normal;color:#2c2c2c;letter-spacing:0.000px;">0</div>
<div class="r" style="left:282px;top:739px;width:3px;height:22px;background:#e3bd00"></div>
<div class="r" style="left:282px;top:739px;width:707px;height:1px;background:#cfcfcf"></div>
<div class="t" style="left:290.00px;top:745.43px;font-size:10.5px;font-weight:normal;font-style:normal;color:#2c2c2c;letter-spacing:0.000px;">5.</div>
<div class="t" style="left:303.80px;top:745.43px;font-size:10.5px;font-weight:normal;font-style:normal;color:#2c2c2c;letter-spacing:-0.467px;">Sep 5, 2025</div>
<div class="t" style="left:962.50px;top:745.49px;font-size:10px;font-weight:normal;font-style:normal;color:#2c2c2c;letter-spacing:-0.173px;">0.0%</div>
<div class="t" style="left:946.44px;top:745.49px;font-size:10px;font-weight:normal;font-style:normal;color:#2c2c2c;letter-spacing:0.000px;">0</div>
<div class="r" style="left:635px;top:650px;width:1px;height:111px;background:#cfcfcf"></div>
<div class="r" style="left:1019px;top:533px;width:735px;height:351px;border:1px solid #e1e1e1;box-sizing:border-box;background:#fff"></div>
<div class="r" style="left:1035px;top:554px;width:6px;height:6px;background:#8fe05b;border-radius:50%"></div>
<div class="t" style="left:1056.00px;top:548.77px;font-size:14px;font-weight:bold;font-style:normal;color:#2c2c2c;letter-spacing:-0.516px;">Barre</div>
<div class="r" style="left:1502px;top:544px;width:154px;height:26px;border:1px solid #dadada;border-radius:4px;box-sizing:border-box;background:#fafafa"></div>
<svg class="r" style="left:1513px;top:552px;" width="10" height="10" viewBox="0 0 10 10"><rect x="0" y="8.3" width="9.5" height="1.2" fill="#2a9fa6"/><rect x="1" y="6.5" width="1.5" height="2" fill="#2a9fa6"/><rect x="3.3" y="5" width="1.5" height="3.5" fill="#2a9fa6"/><rect x="5.6" y="3" width="1.5" height="5.5" fill="#2a9fa6"/><rect x="7.9" y="0.5" width="1.5" height="8" fill="#2a9fa6"/></svg>
<div class="t" style="left:1526.70px;top:551.63px;font-size:10.5px;font-weight:normal;font-style:normal;color:#2c2c2c;letter-spacing:-0.335px;">Barre</div>
<svg class="r" style="left:1636px;top:554px;" width="10" height="6" viewBox="0 0 10 6"><polyline points="1,1 5,4.8 9,1" fill="none" stroke="#4b4b4b" stroke-width="1.1"/></svg>
<svg class="r" style="left:1670px;top:551px;" width="14" height="14" viewBox="0 0 14 14"><g transform="translate(7,7)" fill="#777"><circle r="4.9"/><path d="M-1.4 -4.5 L-0.8 -6.6 H0.8 L1.4 -4.5Z" transform="rotate(0)"/><path d="M-1.4 -4.5 L-0.8 -6.6 H0.8 L1.4 -4.5Z" transform="rotate(45)"/><path d="M-1.4 -4.5 L-0.8 -6.6 H0.8 L1.4 -4.5Z" transform="rotate(90)"/><path d="M-1.4 -4.5 L-0.8 -6.6 H0.8 L1.4 -4.5Z" transform="rotate(135)"/><path d="M-1.4 -4.5 L-0.8 -6.6 H0.8 L1.4 -4.5Z" transform="rotate(180)"/><path d="M-1.4 -4.5 L-0.8 -6.6 H0.8 L1.4 -4.5Z" transform="rotate(225)"/><path d="M-1.4 -4.5 L-0.8 -6.6 H0.8 L1.4 -4.5Z" transform="rotate(270)"/><path d="M-1.4 -4.5 L-0.8 -6.6 H0.8 L1.4 -4.5Z" transform="rotate(315)"/><circle r="1.7" fill="#fff"/></g></svg>
<svg class="r" style="left:1696px;top:552px;" width="12" height="12" viewBox="0 0 12 12"><rect x="0.8" y="0.8" width="10.4" height="10.4" fill="none" stroke="#7a7a7a" stroke-width="1.6"/><rect x="0.8" y="6" width="5.2" height="5.2" fill="#7a7a7a"/><path d="M5 7 L9.3 2.7 M6 2.7 H9.3 V6" stroke="#7a7a7a" stroke-width="1.4" fill="none"/></svg>
<svg class="r" style="left:1721px;top:555px;" width="12" height="8" viewBox="0 0 12 8"><polyline points="1,1 6,6 11,1" fill="none" stroke="#707070" stroke-width="1.4"/></svg>
<div class="r" style="left:1032px;top:582px;width:709px;height:257px;border:1px solid #e1e1e1;border-bottom:none;box-sizing:border-box"></div>
<div class="t" style="left:1040.70px;top:592.36px;font-size:9.5px;font-weight:normal;font-style:normal;color:#2c2c2c;letter-spacing:-0.116px;">Visites</div>
<div class="r" style="left:1041px;top:609px;width:10px;height:9px;background:#27bdc4"></div>
<svg class="r" style="left:1722.7px;top:590.5px;" width="9" height="9" viewBox="0 0 9 9"><circle cx="4.5" cy="4.5" r="3.8" fill="none" stroke="#2c2c2c" stroke-width="0.9"/><rect x="4" y="3.9" width="0.9" height="2.4" fill="#444"/><rect x="4" y="2.5" width="0.9" height="0.9" fill="#444"/></svg>
<div class="r" style="left:1052px;top:664px;width:688px;height:1px;background:#e8e8e8"></div>
<div class="t" style="left:1040.14px;top:662.59px;font-size:8.5px;font-weight:normal;font-style:normal;color:#4b4b4b;letter-spacing:0.000px;">8</div>
<div class="r" style="left:1052px;top:708px;width:688px;height:1px;background:#e8e8e8"></div>
<div class="t" style="left:1040.14px;top:706.09px;font-size:8.5px;font-weight:normal;font-style:normal;color:#4b4b4b;letter-spacing:0.000px;">6</div>
<div class="r" style="left:1052px;top:751px;width:688px;height:1px;background:#e8e8e8"></div>
<div class="t" style="left:1040.14px;top:749.59px;font-size:8.5px;font-weight:normal;font-style:normal;color:#4b4b4b;letter-spacing:0.000px;">4</div>
<div class="r" style="left:1052px;top:794px;width:688px;height:1px;background:#e8e8e8"></div>
<div class="t" style="left:1040.14px;top:793.09px;font-size:8.5px;font-weight:normal;font-style:normal;color:#4b4b4b;letter-spacing:0.000px;">2</div>
<div class="r" style="left:1032px;top:837px;width:709px;height:1.5px;background:#cfcfcf"></div>
<div class="r" style="left:1128.6px;top:643px;width:103.0px;height:195px;background:#27bdc4"></div>
<div class="r" style="left:1237px;top:837px;width:103px;height:1px;background:#27bdc4"></div>
<div class="r" style="left:1345px;top:837px;width:103px;height:1px;background:#27bdc4"></div>
<div class="r" style="left:1453px;top:837px;width:104px;height:1px;background:#27bdc4"></div>
<div class="r" style="left:1562px;top:837px;width:103px;height:1px;background:#27bdc4"></div>
<div class="t" style="left:1177.34px;top:849.39px;font-size:8.5px;font-weight:normal;font-style:normal;color:#4b4b4b;letter-spacing:0.000px;">1</div>
<div class="t" style="left:1285.24px;top:849.39px;font-size:8.5px;font-weight:normal;font-style:normal;color:#4b4b4b;letter-spacing:0.000px;">2</div>
<div class="t" style="left:1394.04px;top:849.39px;font-size:8.5px;font-weight:normal;font-style:normal;color:#4b4b4b;letter-spacing:0.000px;">3</div>
<div class="t" style="left:1502.34px;top:849.39px;font-size:8.5px;font-weight:normal;font-style:normal;color:#4b4b4b;letter-spacing:0.000px;">4</div>
<div class="t" style="left:1610.64px;top:849.39px;font-size:8.5px;font-weight:normal;font-style:normal;color:#4b4b4b;letter-spacing:0.000px;">5</div>
<div class="t" style="left:1170.00px;top:861.89px;font-size:8.5px;font-weight:normal;font-style:normal;color:#4b4b4b;letter-spacing:0.031px;">Sept.</div>
<svg class="r" style="left:1002px;top:891px;" width="17" height="17" viewBox="0 0 17 17"><circle cx="8.5" cy="8.5" r="8" fill="#4b4b4b"/><rect x="7.6" y="4" width="1.8" height="9" fill="#fff"/><rect x="4" y="7.6" width="9" height="1.8" fill="#fff"/></svg>
</body></html>
